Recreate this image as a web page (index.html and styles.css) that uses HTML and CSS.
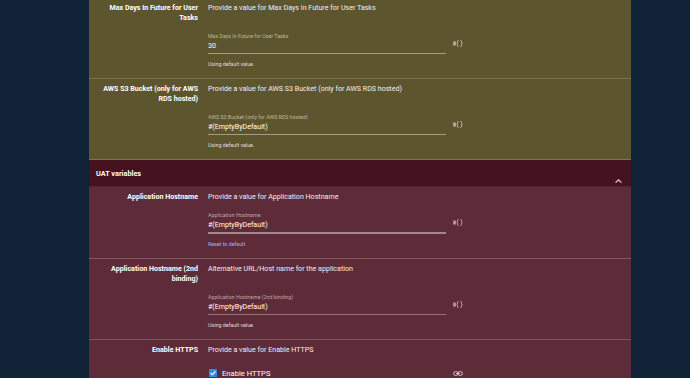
FILE: index.html
```html
<!DOCTYPE html>
<html lang="en">
  <head>
    <meta charset="UTF-8" />
    <meta name="viewport" content="width=device-width, initial-scale=1.0" />
    <title>Variables</title>
    <link rel="stylesheet" href="styles.css">
  </head>
  <body>
    <div class="panel">
      <div class="group group-default">
        <div class="row">
          <div class="label">Max Days In Future for User Tasks</div>
          <div class="body">
            <div class="desc">Provide a value for Max Days In Future for User Tasks</div>
            <div class="field-line">
              <div class="field">
                <div class="field-label">Max Days In Future for User Tasks</div>
                <div class="field-value">30</div>
              </div>
              <svg class="expr-icon" width="10" height="7" viewBox="0 0 10 7">
                <rect x="0" y="1.5" width="3" height="4" fill="currentColor" opacity="0.7" />
                <path d="M5.5 0.5 Q4.5 0.5 4.5 1.5 V2.8 L3.8 3.5 L4.5 4.2 V5.5 Q4.5 6.5 5.5 6.5 M7.5 0.5 Q8.5 0.5 8.5 1.5 V2.8 L9.2 3.5 L8.5 4.2 V5.5 Q8.5 6.5 7.5 6.5" fill="none" stroke="currentColor" stroke-width="0.9" />
              </svg>
            </div>
            <div class="help">Using default value.</div>
          </div>
        </div>
        <div class="row">
          <div class="label">AWS S3 Bucket (only for AWS RDS hosted)</div>
          <div class="body">
            <div class="desc">Provide a value for AWS S3 Bucket (only for AWS RDS hosted)</div>
            <div class="field-line">
              <div class="field">
                <div class="field-label">AWS S3 Bucket (only for AWS RDS hosted)</div>
                <div class="field-value">#(EmptyByDefault)</div>
              </div>
              <svg class="expr-icon" width="10" height="7" viewBox="0 0 10 7">
                <rect x="0" y="1.5" width="3" height="4" fill="currentColor" opacity="0.7" />
                <path d="M5.5 0.5 Q4.5 0.5 4.5 1.5 V2.8 L3.8 3.5 L4.5 4.2 V5.5 Q4.5 6.5 5.5 6.5 M7.5 0.5 Q8.5 0.5 8.5 1.5 V2.8 L9.2 3.5 L8.5 4.2 V5.5 Q8.5 6.5 7.5 6.5" fill="none" stroke="currentColor" stroke-width="0.9" />
              </svg>
            </div>
            <div class="help">Using default value.</div>
          </div>
        </div>
      </div>

      <div class="group group-uat">
        <div class="group-header">
          <span class="group-title">UAT variables</span>
          <svg class="chevron" width="7" height="4" viewBox="0 0 7 4">
            <path d="M0.6 3.6 L3.5 0.8 L6.4 3.6" fill="none" stroke="currentColor" stroke-width="1.2" />
          </svg>
        </div>
        <div class="row">
          <div class="label">Application Hostname</div>
          <div class="body">
            <div class="desc">Provide a value for Application Hostname</div>
            <div class="field-line field-line-tight">
              <div class="field field-modified">
                <div class="field-label">Application Hostname</div>
                <div class="field-value">#(EmptyByDefault)</div>
              </div>
              <svg class="expr-icon" width="10" height="7" viewBox="0 0 10 7">
                <rect x="0" y="1.5" width="3" height="4" fill="currentColor" opacity="0.7" />
                <path d="M5.5 0.5 Q4.5 0.5 4.5 1.5 V2.8 L3.8 3.5 L4.5 4.2 V5.5 Q4.5 6.5 5.5 6.5 M7.5 0.5 Q8.5 0.5 8.5 1.5 V2.8 L9.2 3.5 L8.5 4.2 V5.5 Q8.5 6.5 7.5 6.5" fill="none" stroke="currentColor" stroke-width="0.9" />
              </svg>
            </div>
            <div class="help help-link">Reset to default</div>
          </div>
        </div>
        <div class="row">
          <div class="label">Application Hostname (2nd binding)</div>
          <div class="body">
            <div class="desc">Alternative URL/Host name for the application</div>
            <div class="field-line">
              <div class="field">
                <div class="field-label">Application Hostname (2nd binding)</div>
                <div class="field-value">#(EmptyByDefault)</div>
              </div>
              <svg class="expr-icon" width="10" height="7" viewBox="0 0 10 7">
                <rect x="0" y="1.5" width="3" height="4" fill="currentColor" opacity="0.7" />
                <path d="M5.5 0.5 Q4.5 0.5 4.5 1.5 V2.8 L3.8 3.5 L4.5 4.2 V5.5 Q4.5 6.5 5.5 6.5 M7.5 0.5 Q8.5 0.5 8.5 1.5 V2.8 L9.2 3.5 L8.5 4.2 V5.5 Q8.5 6.5 7.5 6.5" fill="none" stroke="currentColor" stroke-width="0.9" />
              </svg>
            </div>
            <div class="help">Using default value.</div>
          </div>
        </div>
        <div class="row">
          <div class="label">Enable HTTPS</div>
          <div class="body">
            <div class="desc">Provide a value for Enable HTTPS</div>
            <div class="check-line">
              <label class="check">
                <span class="check-box">
                  <svg width="8" height="8" viewBox="0 0 8 8">
                    <path d="M1.6 4.1 L3.3 5.7 L6.5 2.3" fill="none" stroke="#fff" stroke-width="1.2" />
                  </svg>
                </span>
                Enable HTTPS
              </label>
              <svg class="link-icon" width="10" height="5" viewBox="0 0 10 5">
                <rect x="0.6" y="0.6" width="4.6" height="3.8" rx="1.9" fill="none" stroke="currentColor" stroke-width="1" />
                <rect x="4.8" y="0.6" width="4.6" height="3.8" rx="1.9" fill="none" stroke="currentColor" stroke-width="1" />
                <line x1="3" y1="2.5" x2="7" y2="2.5" stroke="currentColor" stroke-width="1" />
              </svg>
            </div>
          </div>
        </div>
      </div>
    </div>
  </body>
</html>
```

FILE: styles.css
```css
body {
  margin: 0;
  padding: 0;
  background: #0f2236;
  font-family: Roboto, "Liberation Sans", sans-serif;
  color: #f2eeee;
  height: 378px;
  overflow: hidden;
}

.panel {
  width: 542px;
  margin: -2px 0 0 89px;
}

.group-default {
  background: #5d552e;
  --line: #7b7553;
  --muted: #bdb89d;
  --underline: #a29e84;
  --icon: #d2cfbd;
}

.group-uat {
  background: #5e2b38;
  --line: #7b5762;
  --muted: #bfa3aa;
  --underline: #94747d;
  --icon: #d3bcc2;
}

.row {
  display: grid;
  grid-template-columns: 109px 1fr;
  column-gap: 10px;
  padding: 5px 0 10px;
  border-bottom: 1px solid var(--line);
}

.label {
  padding-left: 10px;
  text-align: right;
  font-weight: 700;
  font-size: 7.1px;
  line-height: 10px;
  color: #fff;
}

.desc {
  font-size: 7.1px;
  line-height: 10px;
}

.field-line {
  display: flex;
  align-items: center;
  margin-top: 19px;
}

.field-line-tight {
  margin-top: 9px;
}

.field {
  width: 238px;
  padding-bottom: 2px;
  border-bottom: 1px solid var(--underline);
}

.field-modified {
  border-bottom: 2px solid #a08891;
}

.field-label {
  font-size: 5.3px;
  line-height: 8px;
  color: var(--muted);
}

.field-value {
  font-size: 7.1px;
  line-height: 10px;
  margin-top: 1px;
  color: #fff;
}

.expr-icon {
  margin-left: 7px;
  color: var(--icon);
}

.help {
  margin-top: 6px;
  font-size: 5.3px;
  line-height: 8px;
  color: #e2dcd8;
}

.help-link {
  color: #aeb0ea;
}

.group-header {
  display: flex;
  justify-content: space-between;
  align-items: flex-end;
  height: 26px;
  padding: 0 9px 0 7px;
  background: #44131f;
  border-bottom: 1px solid #56202d;
}

.group-title {
  align-self: center;
  font-weight: 700;
  font-size: 7.3px;
  color: #fff;
}

.chevron {
  margin-bottom: 3px;
  color: #e2c8ce;
}

.check-line {
  display: flex;
  align-items: center;
  margin-top: 12px;
  height: 12px;
}

.check {
  display: flex;
  align-items: center;
  gap: 5px;
  width: 245px;
  font-size: 7.6px;
  color: #fff;
}

.check-box {
  display: flex;
  width: 8px;
  height: 8px;
  border-radius: 1px;
  background: #2f8ce0;
  margin-left: 1px;
}

.link-icon {
  color: #d6c2c7;
}
```
